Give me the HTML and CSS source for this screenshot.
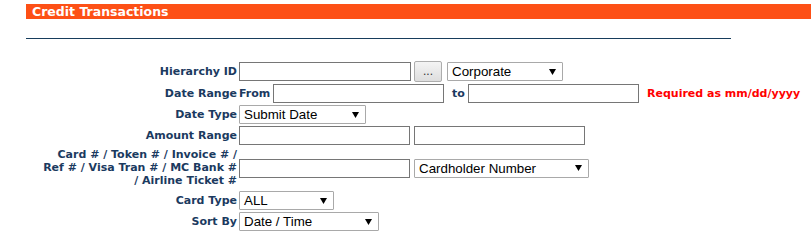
FILE: index.html
```html
<!DOCTYPE html>
<html>
<head>
<meta charset="utf-8">
<link rel="stylesheet" href="styles.css">
</head>
<body>
<div class="page">
  <div class="title-bar">Credit Transactions</div>
  <hr class="rule">
  <form class="form">
    <label class="lbl">Hierarchy ID</label>
    <div class="field">
      <input class="txt w172" type="text">
      <button type="button" class="btn">...</button>
      <span class="sel w116">Corporate</span>
    </div>

    <label class="lbl">Date Range</label>
    <div class="field">
      <span class="inline-lbl from">From</span>
      <input class="txt w171" type="text">
      <span class="inline-lbl to">to</span>
      <input class="txt w171" type="text">
      <span class="req">Required as mm/dd/yyyy</span>
    </div>

    <label class="lbl">Date Type</label>
    <div class="field">
      <span class="sel w127">Submit Date</span>
    </div>

    <label class="lbl">Amount Range</label>
    <div class="field">
      <input class="txt w171" type="text">
      <input class="txt w171 ml5" type="text">
    </div>

    <label class="lbl multi">Card # / Token # / Invoice # / Ref # / Visa Tran # / MC Bank # / Airline Ticket #</label>
    <div class="field">
      <input class="txt w171" type="text">
      <span class="sel w175 ml5">Cardholder Number</span>
    </div>

    <label class="lbl">Card Type</label>
    <div class="field">
      <span class="sel w95">ALL</span>
    </div>

    <label class="lbl">Sort By</label>
    <div class="field">
      <span class="sel w140">Date / Time</span>
    </div>
  </form>
</div>
</body>
</html>
```
FILE: styles.css
```css
html, body {
  margin: 0;
  padding: 0;
  background: #ffffff;
}
.page {
  padding-top: 4px;
  padding-left: 26px;
}
.title-bar {
  height: 15px;
  line-height: 15px;
  background: #fd5016;
  color: #ffffff;
  font-family: "DejaVu Sans", Verdana, sans-serif;
  font-weight: bold;
  font-size: 12.5px;
  padding-left: 6px;
}
.rule {
  width: 705px;
  margin: 19px 0 0 0;
  border: 0;
  height: 1px;
  background: #173d5c;
}
.form {
  display: grid;
  grid-template-columns: 200px auto;
  column-gap: 2px;
  row-gap: 2px;
  margin-top: 22px;
  margin-left: 11px;
  align-items: center;
}
.lbl {
  font-family: "DejaVu Sans", Verdana, sans-serif;
  font-weight: bold;
  font-size: 11px;
  color: #1b3a5f;
  text-align: right;
}
.lbl.multi {
  line-height: 13px;
  padding: 1px 0 2px;
}
.field {
  display: flex;
  align-items: center;
  min-height: 19px;
}
.txt {
  box-sizing: border-box;
  height: 19px;
  margin: 0;
  padding: 0 2px;
  border: 1px solid #767676;
  background: #fff;
  font-family: "Liberation Sans", Arial, sans-serif;
  font-size: 13.33px;
}
.w171 { width: 171px; }
.w172 { width: 172px; }
.ml5 { margin-left: 4px; }
.btn {
  box-sizing: border-box;
  width: 28px;
  height: 21px;
  margin: 0 0 0 3px;
  padding: 0 0 2px;
  border: 1px solid #adadad;
  border-radius: 2px;
  background: linear-gradient(#f4f4f4, #dedede);
  font-family: "Liberation Sans", Arial, sans-serif;
  font-size: 12px;
  color: #333;
  line-height: 18px;
}
.sel {
  box-sizing: border-box;
  display: inline-block;
  height: 19px;
  line-height: 17px;
  padding: 0 0 0 4px;
  border: 1px solid #a9a9a9;
  border-radius: 1px;
  background: #fff url("data:image/svg+xml;utf8,<svg xmlns='http://www.w3.org/2000/svg' width='7' height='6'><path d='M0 0H7L3.5 6Z' fill='black'/></svg>") no-repeat right 6px center;
  font-family: "Liberation Sans", Arial, sans-serif;
  font-size: 13.33px;
  color: #000;
}
.btn + .sel { margin-left: 5px; }
.w116 { width: 116px; }
.w127 { width: 127px; }
.w175 { width: 175px; }
.w95 { width: 95px; }
.w140 { width: 140px; }
.inline-lbl {
  font-family: "DejaVu Sans", Verdana, sans-serif;
  font-weight: bold;
  font-size: 11px;
  color: #1b3a5f;
}
.from { margin-left: 0; width: 34px; }
.to { margin-left: 8px; width: 16px; }
.req {
  margin-left: 8px;
  font-family: "DejaVu Sans", Verdana, sans-serif;
  font-weight: bold;
  font-size: 11px;
  color: #ff0000;
}
```
